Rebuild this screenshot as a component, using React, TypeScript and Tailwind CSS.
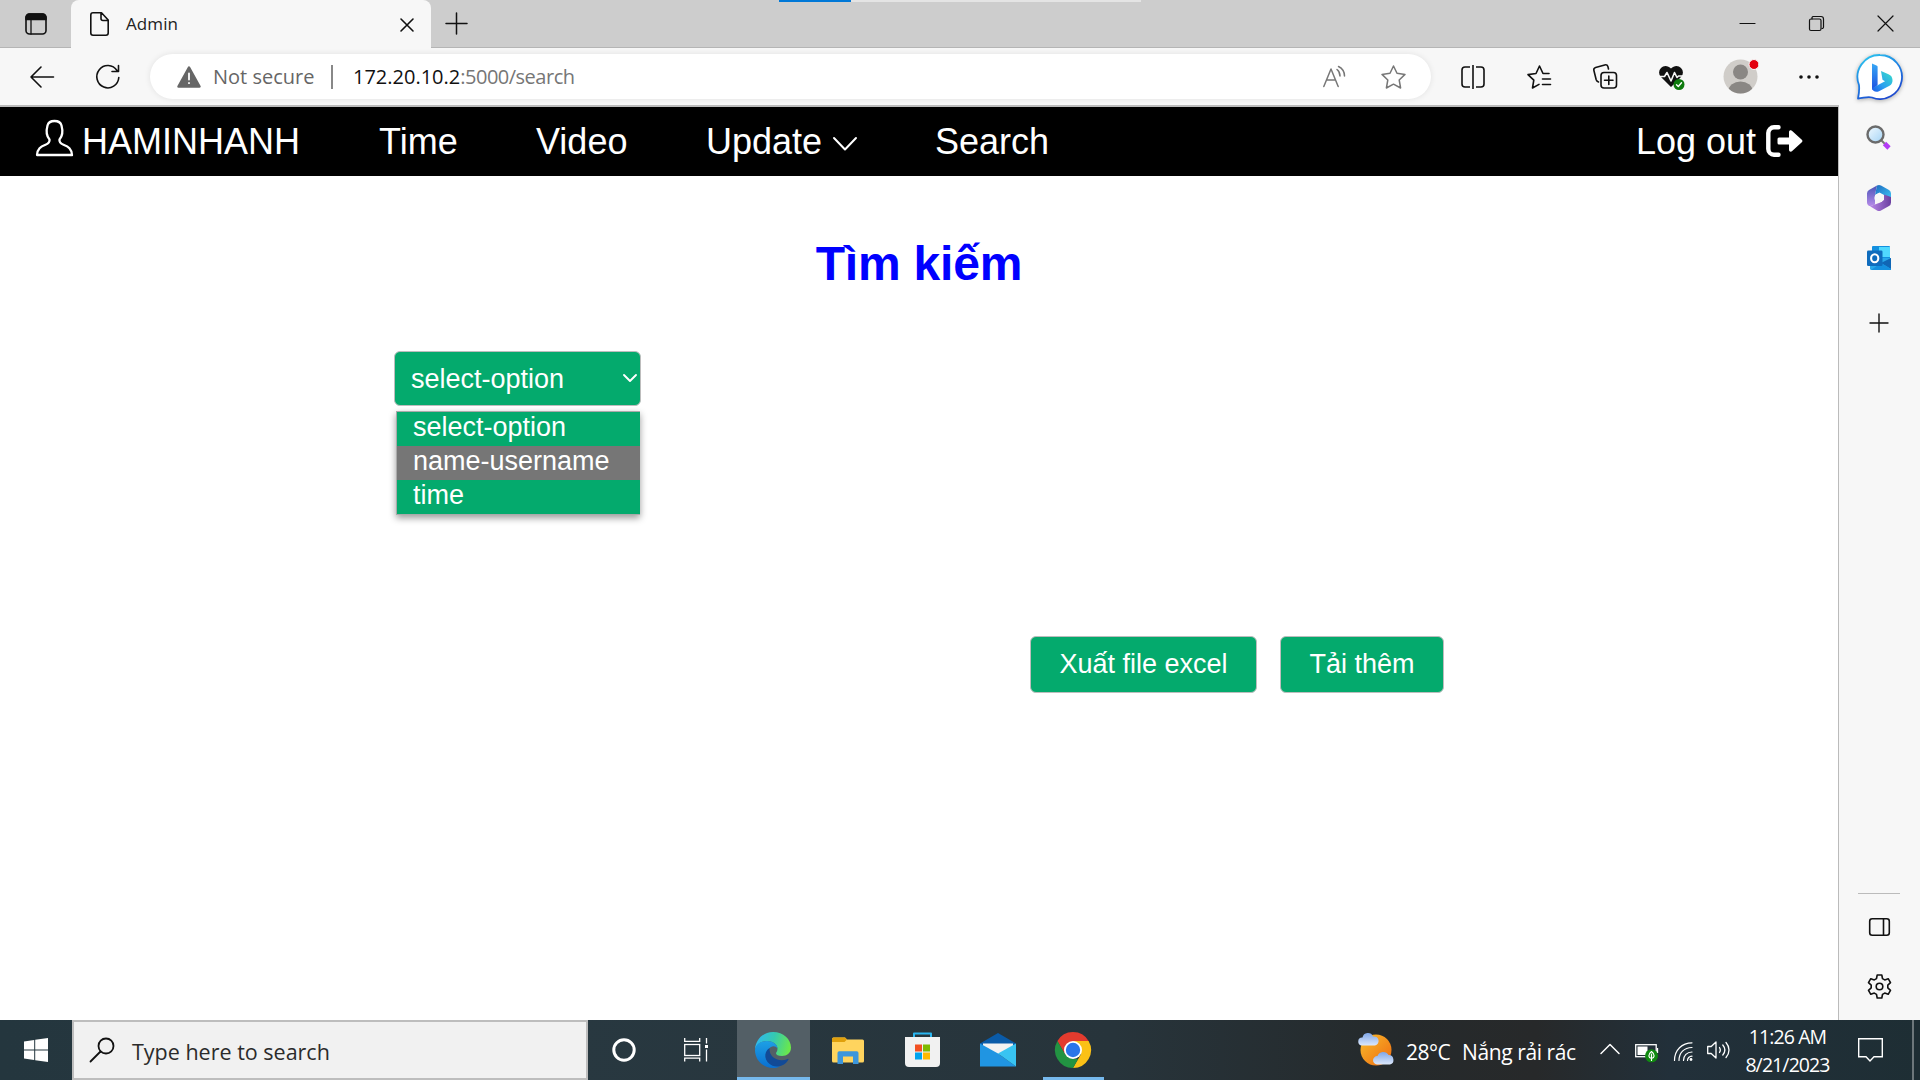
import React from "react";

type IconProps = { w: number; h: number; className?: string; children: React.ReactNode };

function Icon({ w, h, className = "", children }: IconProps) {
  return (
    <svg
      width={w}
      height={h}
      viewBox={`0 0 ${w} ${h}`}
      fill="none"
      stroke="currentColor"
      strokeWidth={1.6}
      strokeLinecap="round"
      strokeLinejoin="round"
      className={`block shrink-0 overflow-visible ${className}`}
    >
      {children}
    </svg>
  );
}

function TabStrip() {
  return (
    <div className="flex h-12 shrink-0 bg-[#cdcdcd] text-[#111]">
      <div className="flex w-[71px] shrink-0 items-center border-b border-[#b5b5b5] pl-[25px]">
        <Icon w={22} h={22}>
          <rect x="1" y="1" width="20" height="20" rx="3.5" />
          <path d="M1 6.5V4.5a3.5 3.5 0 0 1 3.5-3.5h13A3.5 3.5 0 0 1 21 4.500V6.500Z" fill="currentColor" />
          <path d="M6 6v15" strokeWidth={1.3} />
        </Icon>
      </div>
      <div className="flex w-[360px] shrink-0 items-center rounded-t-lg bg-[#f7f7f7] pl-[19px]">
        <Icon w={19} h={24}>
          <path d="M3 .8h8.500L18.200 8v13a2.200 2.200 0 0 1-2.200 2.200H3A2.200 2.200 0 0 1 .8 21V3A2.200 2.200 0 0 1 3 .8ZM11 1v5.500A2 2 0 0 0 13 8.500h5" />
        </Icon>
        <span className="ml-[17px] w-[275px] text-[17px] leading-6 tracking-[0.1px] text-[#222]">Admin</span>
        <Icon w={12} h={12} className="mt-[2px]">
          <path d="M0 0l12 12M12 0L0 12" />
        </Icon>
      </div>
      <div className="flex flex-1 items-center border-b border-[#b5b5b5] pl-[15px]">
        <Icon w={21} h={21}>
          <path d="M10.500 0v21M0 10.500h21" strokeWidth={1.5} />
        </Icon>
        <div className="ml-[312px] flex h-[2px] w-[362px] self-start bg-[#e4e4e4]">
          <div className="w-[72px] bg-[#0078d7]" />
        </div>
        <Icon w={15} h={15} className="ml-[599px]">
          <path d="M0 7.500h15" strokeWidth={1.2} />
        </Icon>
        <Icon w={15} h={15} className="ml-[54px]">
          <path d="M3 3V1.500A1.500 1.500 0 0 1 4.500.500H12A2.500 2.500 0 0 1 14.500 3v8a1.500 1.500 0 0 1-1.500 1.500" strokeWidth={1.2} />
          <rect x=".5" y="3" width="11.500" height="11.500" rx="1.500" strokeWidth={1.2} />
        </Icon>
        <Icon w={15} h={15} className="ml-[54px]">
          <path d="M0 0l15 15M15 0L0 15" strokeWidth={1.2} />
        </Icon>
      </div>
    </div>
  );
}

function Toolbar() {
  return (
    <div className="flex h-[57px] shrink-0 items-center bg-[#f7f7f7] text-[#111]">
      <Icon w={24} h={22} className="ml-[30px]">
        <path d="M23.500 11H1M11 1L1 11l10 10" />
      </Icon>
      <Icon w={24} h={24} className="ml-[42px]">
        <path d="M22.800 12.500A11 11.200 0 1 1 21 5.500M22.500.500V6.500H16" />
      </Icon>
      <div className="ml-[30px] flex h-[45px] w-[1281px] shrink-0 items-center rounded-full bg-white shadow-[0_0_6px_rgba(0,0,0,0.09)]">
        <Icon w={24} h={22} className="ml-[27px] text-[#666]">
          <path d="M12 1.500L22.500 20.500H1.500Z" fill="currentColor" strokeWidth={2.500} />
          <path d="M12 7.500v6M12 17v.2" stroke="#fff" strokeWidth={1.800} />
        </Icon>
        <span className="ml-[12px] w-[118px] whitespace-nowrap text-[20px] leading-6 text-[#666]">Not secure</span>
        <div className="h-6 w-[2px] bg-[#888]" />
        <span className="ml-[20px] w-[970px] whitespace-nowrap text-[20px] leading-6 text-[#767676]">
          <span className="text-[#111]">172.20.10.2</span>
          <span className="tracking-[-0.5px]">:5000/search</span>
        </span>
        <Icon w={23} h={22} className="text-[#777]">
          <path d="M.8 20.500L8 3l7.200 17.500M3.500 14h9M14 3.500c2 1.500 3 3.500 3 6.500M15.500.500c4 2 6 5.500 6 9.500" strokeWidth={1.500} />
        </Icon>
        <Icon w={25} h={24} className="ml-[35px] text-[#777]">
          <path d="M12.500 1l3.500 7.300 8 1.100-5.800 5.600 1.400 8-7.100-3.800L5.400 23l1.400-8L1 9.400l8-1.100Z" strokeWidth={1.500} />
        </Icon>
      </div>
      <Icon w={24} h={24} className="ml-[30px]">
        <path d="M9 2H4a3 3 0 0 0-3 3v14a3 3 0 0 0 3 3h5M15 2h5a3 3 0 0 1 3 3v14a3 3 0 0 1-3 3h-5M12 0v24" strokeLinecap="butt" />
      </Icon>
      <Icon w={24} h={24} className="ml-[42px]">
        <path d="M22 8.500h-6l-3.500-7.500-3.500 7.500-8 1.100 5.800 5.600-1.300 7.800 6.500-3.600M15.500 14h8M15.500 19.500h8" />
      </Icon>
      <Icon w={24} h={25} className="ml-[42px]">
        <rect x="8" y="8.500" width="15.500" height="15.500" rx="3" />
        <path d="M15.800 12v8.500M11.500 16.200H20M15.500 5l-.6-2.400A2.600 2.600 0 0 0 11.700.900L2.600 3.400A2.600 2.600 0 0 0 .900 6.500l2.300 9.200A3.500 3.500 0 0 0 5.500 18" />
      </Icon>
      <Icon w={26} h={24} className="ml-[42px]">
        <path d="M12 22L2 12A6.200 6.200 0 0 1 2 3C4.500.200 9 .200 12 3.500 15 .200 19.500.200 22 3a6.200 6.200 0 0 1 0 9Z" fill="#111" stroke="none" />
        <path d="M0 11.500h5.500L8 7.500l4 8.500 3.500-8.500 2.500 5 1.500-1.500H24" stroke="#f7f7f7" strokeWidth={1.600} />
        <circle cx="20" cy="19.500" r="5.500" fill="#0f7b0f" stroke="none" />
        <path d="M17.500 19.700l1.800 1.800 3.200-3.700" stroke="#fff" strokeWidth={1.400} />
      </Icon>
      <Icon w={35} h={35} className="ml-[38px]">
        <clipPath id="avatarClip"><circle cx="17.500" cy="17.500" r="17" /></clipPath>
        <g clipPath="url(#avatarClip)" stroke="none">
          <rect width="35" height="35" fill="#d0cdc9" />
          <circle cx="17.500" cy="13" r="7.500" fill="#8a8784" />
          <ellipse cx="17.500" cy="32" rx="12" ry="9.500" fill="#8a8784" />
        </g>
        <circle cx="31" cy="5.500" r="5" fill="#e3000f" stroke="#f7f7f7" strokeWidth={1} />
      </Icon>
      <Icon w={20} h={4} className="ml-[41px]">
        <g fill="currentColor" stroke="none">
          <circle cx="2" cy="2" r="1.800" />
          <circle cx="10" cy="2" r="1.800" />
          <circle cx="18" cy="2" r="1.800" />
        </g>
      </Icon>
      <Icon w={46} h={46} className="ml-[38px] drop-shadow-[0_1px_2px_rgba(0,0,0,0.3)]">
        <defs>
          <linearGradient id="bubble" x1="0" y1="0" x2=".5" y2="1">
            <stop offset="0" stopColor="#2fd0f0" />
            <stop offset=".5" stopColor="#1e86e5" />
            <stop offset="1" stopColor="#1d4bd0" />
          </linearGradient>
          <linearGradient id="bStem" x1="0" y1="0" x2="0" y2="1">
            <stop offset="0" stopColor="#37a8f5" />
            <stop offset="1" stopColor="#1c4ee0" />
          </linearGradient>
          <linearGradient id="bBowl" x1="1" y1="0" x2="0" y2="1">
            <stop offset="0" stopColor="#37e0c8" />
            <stop offset=".6" stopColor="#2b9ff0" />
            <stop offset="1" stopColor="#1c58e8" />
          </linearGradient>
        </defs>
        <path d="M23 1a22 22 0 1 1-8 42.500C10 42 6 44.500 1 44.500 2 40 2.500 36 2 31A22 22 0 0 1 23 1Z" fill="#fff" stroke="url(#bubble)" strokeWidth={1.800} />
        <path d="M15 9.500l5 2.200a1 1 0 0 1 .6 1V31l-5.600 5Z" fill="url(#bStem)" stroke="none" />
        <path d="M24 17l7.500 3.200a6.500 6.500 0 0 1 1 11.500L22 37.300c-3.500 1.500-6.500-.3-7-3l13-7-2.500-1.500Z" fill="url(#bBowl)" stroke="none" />
      </Icon>
    </div>
  );
}

function SiteNav() {
  return (
    <nav className="flex h-[69px] shrink-0 items-center whitespace-nowrap bg-black font-['Liberation_Sans',Arial,sans-serif] text-[36px] leading-[44px] text-white">
      <Icon w={37} h={37} className="-mt-[6px] ml-[36px]">
        <path
          d="M13.500 19.500C10.500 16 10 11 11.500 5.500 12.500 1.500 15 1 18.500 1s6 .5 7 4.500c1.500 5.500 1 10.500-2 14-.5 3 1 4 4 5.200 5 2 8 4 8.500 10.300H1c.5-6.300 3.500-8.300 8.500-10.300 3-1.200 4.500-2.200 4-5.200Z"
          strokeWidth={2.300}
        />
      </Icon>
      <span className="ml-[9px] w-[297px]">HAMINHANH</span>
      <span className="w-[157px]">Time</span>
      <span className="w-[170px]">Video</span>
      <span className="w-[128px]">Update</span>
      <Icon w={22} h={12} className="mt-[4px]">
        <path d="M0 0l11 11.500L22 0" strokeWidth={2} />
      </Icon>
      <span className="ml-[79px] w-[701px]">Search</span>
      <span className="w-[130px]">Log out</span>
      <Icon w={37} h={32} className="-mt-[2px]">
        <path d="M12.500 2.300H8A5.700 5.700 0 0 0 2.300 8v16A5.700 5.700 0 0 0 8 29.700h4.500" strokeWidth={4.400} />
        <path d="M13 12.500h10V7.300c0-2 2-2.500 3.200-1.300l9.600 8.800c.8.700.8 1.700 0 2.400L26.200 26c-1.200 1.200-3.200.7-3.200-1.300v-5.200H13a1.500 1.500 0 0 1-1.500-1.500v-4a1.500 1.500 0 0 1 1.500-1.500Z" fill="currentColor" stroke="none" />
      </Icon>
    </nav>
  );
}

function SelectBox() {
  const row = "h-[34px] pl-[16px] leading-[30px]";
  return (
    <div className="relative ml-[394px] mt-[59px] h-[55px] w-[247px] shrink-0">
      <div className="flex h-[55px] items-center justify-between rounded-[6px] border border-[#bdbdbd] bg-[#04aa6d] pl-[16px] pr-[4px]">
        <span className="leading-[32px]">select-option</span>
        <Icon w={12} h={7}>
          <path d="M0 0l6 6 6-6" strokeWidth={1.900} />
        </Icon>
      </div>
      <div className="absolute left-[2px] top-[60px] w-[244px] border border-r-0 border-[#aaa] bg-[#04aa6d] shadow-[0_3px_7px_rgba(0,0,0,0.4)]">
        <div className={row}>select-option</div>
        <div className={`${row} bg-[#767676]`}>name-username</div>
        <div className={row}>time</div>
      </div>
    </div>
  );
}

function Page() {
  const button = "h-[57px] rounded-[6px] border border-[#bdbdbd] bg-[#04aa6d] text-center";
  return (
    <main className="flex flex-1 flex-col bg-white font-['Liberation_Sans',Arial,sans-serif] text-[27px] text-white">
      <h1 className="mt-[60px] text-center text-[48px] font-bold leading-[56px] tracking-[-0.2px] text-[#0000ff]">Tìm kiếm</h1>
      <SelectBox />
      <div className="ml-[1030px] mt-[230px] flex gap-[23px]">
        <button className={`${button} w-[227px]`}>Xuất file excel</button>
        <button className={`${button} w-[164px]`}>Tải thêm</button>
      </div>
    </main>
  );
}

function Sidebar() {
  return (
    <aside className="flex w-[80px] shrink-0 flex-col items-center bg-[#f7f7f7] text-[#111]">
      <Icon w={26} h={26} className="mt-[20px]">
        <defs>
          <linearGradient id="lens" x1="0" y1="0" x2="1" y2="1">
            <stop offset="0" stopColor="#f2faff" />
            <stop offset="1" stopColor="#a3d3f5" />
          </linearGradient>
        </defs>
        <path d="M18.500 18.500l4.500 4.500" stroke="#b43cf5" strokeWidth={4.600} strokeLinecap="butt" />
        <path d="M14 14l4 4" stroke="#777" strokeWidth={2} />
        <circle cx="9.500" cy="9.500" r="8" fill="url(#lens)" stroke="#6b6b6b" strokeWidth={2.400} />
      </Icon>
      <Icon w={24} h={26} className="mt-[34px]">
        <defs>
          <linearGradient id="m1" x1="0" y1="0" x2="0" y2="1"><stop offset="0" stopColor="#4a55b8" /><stop offset="1" stopColor="#b58be8" /></linearGradient>
          <linearGradient id="m2" x1="0" y1="0" x2="1" y2="1"><stop offset="0" stopColor="#1c6ac0" /><stop offset="1" stopColor="#3fc6f5" /></linearGradient>
          <linearGradient id="m3" x1="0" y1="0" x2="1" y2="0"><stop offset="0" stopColor="#b888e8" /><stop offset="1" stopColor="#6b3fa0" /></linearGradient>
        </defs>
        <g stroke="none">
          <path d="M10 .6L2 5A4 4 0 0 0 0 8.500v9A3.500 3.500 0 0 0 4 21l4-1.500V10Z" fill="url(#m1)" />
          <path d="M10 .6a4 4 0 0 1 4 0L22 5a4 4 0 0 1 2 3.500V15l-7-5-4.500-2.500L8 10Z" fill="url(#m2)" />
          <path d="M24 12v5.500a4 4 0 0 1-2 3.500l-8 4.400a4 4 0 0 1-4 0L3 21.300l9-3.300 5-3V9.500Z" fill="url(#m3)" />
          <circle cx="12" cy="13" r="4.600" fill="#f7f7f7" />
        </g>
      </Icon>
      <Icon w={24} h={24} className="mt-[35px]">
        <g stroke="none">
          <rect x="5" y="0" width="18" height="16" rx="1" fill="#1490df" />
          <rect x="12" y="1" width="11" height="10" fill="#50d9ff" />
          <path d="M3 12h21v10.500a1.500 1.500 0 0 1-1.500 1.500H4.500A1.500 1.500 0 0 1 3 22.500Z" fill="#28a8ea" />
          <path d="M24 12v11L14 17Z" fill="#1066b5" />
          <path d="M14 17l10 6v1H4Z" fill="#1490df" />
          <rect x="0" y="4.500" width="15.500" height="15.500" rx="1.300" fill="#0f6cbd" />
        </g>
        <ellipse cx="7.700" cy="12.200" rx="3.600" ry="4" stroke="#fff" strokeWidth={2.100} />
      </Icon>
      <Icon w={18} h={18} className="mt-[44px]">
        <path d="M9 0v18M0 9h18" strokeWidth={1.400} />
      </Icon>
      <div className="mt-[561px] h-px w-[42px] bg-[#bbb]" />
      <Icon w={21} h={18} className="mt-[24px]">
        <rect x=".7" y=".7" width="19.600" height="16.600" rx="2.500" />
        <path d="M14.500.700v16.600" />
      </Icon>
      <Icon w={25} h={25} className="mt-[38px]">
        <path d="M10.200 1h4.600l.7 3.600 2.200 1.300 3.500-1.200 2.300 4-2.700 2.500v2.600l2.700 2.500-2.300 4-3.500-1.200-2.200 1.300-.7 3.600h-4.600l-.7-3.600-2.200-1.300-3.500 1.200-2.300-4 2.700-2.500v-2.600L1.500 8.700l2.300-4 3.500 1.200 2.200-1.300Z" />
        <circle cx="12.500" cy="12.500" r="3.300" />
      </Icon>
    </aside>
  );
}

function Taskbar() {
  return (
    <div className="flex h-[60px] shrink-0 items-center bg-[linear-gradient(90deg,#24363e_0%,#283840_30%,#27343b_58%,#252a2c_72%,#27292a_80%,#22303a_87%,#1e2e34_100%)] text-white">
      <div className="flex w-[72px] shrink-0 pl-[24px]">
        <Icon w={24} h={24}>
          <path d="M0 3.500L10.200 2v9.500H0ZM11.200 1.800L24 0v11.500H11.200ZM0 12.500h10.200V22L0 20.600ZM11.200 12.500H24V24l-12.800-1.800Z" fill="#fff" stroke="none" />
        </Icon>
      </div>
      <div className="flex h-[60px] w-[516px] shrink-0 items-center border-2 border-[#bdbdbd] bg-[#f1f1f1] pl-[16px] text-[#111]">
        <Icon w={24} h={24}>
          <circle cx="16" cy="8" r="7.500" strokeWidth={1.800} />
          <path d="M10.500 13.500L.500 23.500" strokeWidth={1.800} />
        </Icon>
        <span className="ml-[18px] pt-[3px] text-[21.500px] leading-7 text-[#2b2b2b]">Type here to search</span>
      </div>
      <Icon w={24} h={24} className="ml-[24px]">
        <circle cx="12" cy="12" r="10.200" strokeWidth={3} />
      </Icon>
      <Icon w={24} h={24} className="ml-[48px]">
        <g strokeWidth={1.300} strokeLinecap="butt" strokeLinejoin="miter">
          <rect x=".7" y="6.500" width="15" height="11" />
          <path d="M.7 0v3.300h15V0M.7 23.500v-3.300h15v3.300M22.500 0v5.500M22.500 11.500v12" />
        </g>
        <rect x="21" y="7" width="3" height="3" fill="#fff" stroke="none" />
      </Icon>
      <div className="ml-[29px] flex h-[60px] w-[73px] shrink-0 flex-col border-b-[3px] border-[#76b9ed] bg-[#535f66] pl-[18px] pt-[12px]">
        <Icon w={36} h={36}>
          <defs>
            <linearGradient id="e1" x1="0" y1=".3" x2="1" y2=".5"><stop offset="0" stopColor="#2fb8f2" /><stop offset=".5" stopColor="#35c9b0" /><stop offset="1" stopColor="#6be84a" /></linearGradient>
            <linearGradient id="e2" x1="0" y1="0" x2="0" y2="1"><stop offset="0" stopColor="#1da0e5" /><stop offset="1" stopColor="#0a6fd0" /></linearGradient>
          </defs>
          <g stroke="none">
            <path d="M0 17C1 7 8.500 0 18 0c10.500 0 18 7.500 18 15.500 0 5.500-4 8.500-9 8.500-4 0-6-1.500-6-2.800 0-1 1.500-1.700 1.500-4.500C22.500 12 17 9 12 9 6 9 2 12.500 0 17Z" fill="url(#e1)" />
            <path d="M0 18C.5 12 6 9 12 9c5.500 0 10.500 3.200 10.500 7.500-1-1.500-2.500-2.200-4-2.200C15 14.300 12 18 12 22.500 12 29 18 34 25 34.500 22.500 35.500 20 36 18 36 8 36 0 28 0 18Z" fill="url(#e2)" />
            <path d="M14.500 16C8 20 9 30 17.500 33.800c5.500 2.200 13-.3 16-6.300.2-.6-.3-.9-.8-.6C24 30.500 14 26 14.500 16Z" fill="#124a96" />
          </g>
        </Icon>
      </div>
      <Icon w={32} h={27} className="ml-[22px]">
        <g stroke="none">
          <path d="M0 2a1.500 1.500 0 0 1 1.500-1.500H13l2 2h15.500A1.500 1.500 0 0 1 32 4v20a1.500 1.500 0 0 1-1.500 1.500h-29A1.500 1.500 0 0 1 0 24Z" fill="#ffd45e" />
          <path d="M0 5V2A1.500 1.500 0 0 1 1.500.500H13L15 2.500 12.500 5Z" fill="#e0a00c" />
          <path d="M5.500 27V16A1.800 1.800 0 0 1 7.300 14.200h17.400A1.800 1.800 0 0 1 26.500 16v11H21v-7.500H11V27Z" fill="#3c96dc" />
        </g>
      </Icon>
      <Icon w={35} h={36} className="ml-[41px]">
        <path d="M9 5V1.500h17V5" stroke="#2ab6f0" strokeWidth={2} />
        <path d="M0 5h35v26a4 4 0 0 1-4 4H4a4 4 0 0 1-4-4Z" fill="#f1f1f1" stroke="none" />
        <g stroke="none">
          <rect x="10" y="12.500" width="7" height="7" fill="#f25022" />
          <rect x="18" y="12.500" width="7" height="7" fill="#7fba00" />
          <rect x="10" y="20.500" width="7" height="7" fill="#00a4ef" />
          <rect x="18" y="20.500" width="7" height="7" fill="#ffb900" />
        </g>
      </Icon>
      <Icon w={36} h={34} className="ml-[40px]">
        <g stroke="none">
          <path d="M0 10.500L18 0l18 10.500V16H0Z" fill="#0a5ba8" />
          <path d="M3 10.500h30v4L18 22 3 14.500Z" fill="#f2f2f2" />
          <path d="M0 10.500L18 20.500 36 33.500H0Z" fill="#2095e2" />
          <path d="M36 10.500v23L18 20.500Z" fill="#38c4f2" />
        </g>
      </Icon>
      <div className="ml-[27px] flex h-[60px] w-[61px] shrink-0 flex-col border-b-[3px] border-[#76b9ed] pl-[12px] pt-[12px]">
        <Icon w={36} h={36}>
          <g stroke="none">
            <path d="M2.400 9A18 18 0 0 1 33.600 9H18L10.200 22.500Z" fill="#e33b2e" />
            <path d="M33.600 9A18 18 0 0 1 18 36L25.800 22.500 18 9Z" fill="#fbc116" />
            <path d="M18 36A18 18 0 0 1 2.400 9L10.200 22.500 18 27h5Z" fill="#229342" />
            <circle cx="18" cy="18" r="9" fill="#fff" />
            <circle cx="18" cy="18" r="7.200" fill="#2a75ea" />
          </g>
        </Icon>
      </div>
      <Icon w={36} h={34} className="ml-[254px] -mt-[2px]">
        <defs>
          <linearGradient id="sun" x1="0" y1="0" x2="1" y2="1"><stop offset="0" stopColor="#f8bd2c" /><stop offset="1" stopColor="#ef6a10" /></linearGradient>
          <linearGradient id="cloud" x1="0" y1="0" x2="0" y2="1"><stop offset="0" stopColor="#7fa6e8" /><stop offset="1" stopColor="#dce8fb" /></linearGradient>
        </defs>
        <g stroke="none">
          <circle cx="18" cy="18" r="15.500" fill="url(#sun)" />
          <path d="M4 13.500a4 4 0 0 1 .5-8A5.500 5.500 0 0 1 15 4.500a4.600 4.600 0 0 1 2 9Z" fill="url(#cloud)" />
          <path d="M19 32.500a4.200 4.200 0 0 1 .5-8.400 6 6 0 0 1 11-1 4.800 4.800 0 0 1 1.500 9.400Z" fill="url(#cloud)" />
        </g>
      </Icon>
      <span className="ml-[12px] w-[56px] whitespace-nowrap pt-[3px] text-[21px] leading-7 tracking-[-0.5px]">28°C</span>
      <span className="w-[139px] whitespace-nowrap pt-[3px] text-[21px] leading-7 tracking-[-0.4px]">Nắng rải rác</span>
      <Icon w={18} h={10} className="mt-[-2px]">
        <path d="M0 9.500L9 .500l9 9" strokeWidth={1.500} />
      </Icon>
      <Icon w={24} h={18} className="ml-[16px] mt-[6px]">
        <g strokeLinecap="butt" strokeLinejoin="miter">
          <rect x=".7" y=".7" width="20.500" height="12" strokeWidth={1.300} />
          <rect x="2.500" y="2.500" width="10" height="8.500" fill="#fff" stroke="none" />
          <path d="M22.500 4v5" strokeWidth={1.300} />
        </g>
        <circle cx="16.500" cy="11.800" r="6.500" fill="#108a10" stroke="none" />
        <path d="M16.500 7.500c-4 3-3 6.500 0 7 3-.5 4-4 0-7ZM16.500 10v6.500" strokeWidth={1.200} />
      </Icon>
      <Icon w={19} h={19} className="ml-[15px] mt-[3px]">
        <path d="M.500 18.500C.500 8 8 .800 18 .800M5 18.500C5 11 10 5.500 18 5.500M9.500 18.500c0-4.800 3.500-8.500 8.500-8.500M13.500 18.500c0-2.200 1.800-4.300 4.500-4.300" strokeWidth={1.200} />
        <circle cx="17" cy="17.500" r="1.400" fill="#fff" stroke="none" />
      </Icon>
      <Icon w={23} h={18} className="ml-[14px]">
        <path d="M.700 5.500h3.500L9 1v16l-4.800-4.500H.700ZM12.500 6.500c1 1.500 1 3.500 0 5M15.800 4c2.500 3 2.500 7 0 10M19 1.500c4 4.500 4 10.500 0 15" strokeWidth={1.300} />
      </Icon>
      <div className="ml-[8px] w-[99px] whitespace-nowrap pt-px text-center text-[19.500px] leading-[28px] tracking-[-0.9px]">
        <div>11:26 AM</div>
        <div>8/21/2023</div>
      </div>
      <Icon w={25} h={24} className="ml-[21px]">
        <path d="M.7.700h23.600v18H16l-4 4.300-4-4.300H.700Z" strokeWidth={1.400} strokeLinejoin="miter" />
      </Icon>
      <div className="ml-auto mr-[6px] h-[60px] w-[2px] bg-[#6d777b]" />
    </div>
  );
}

export default function App() {
  return (
    <div className="flex h-[1080px] w-[1920px] flex-col overflow-hidden bg-[#f7f7f7] font-['Open_Sans','Noto_Sans',sans-serif]">
      <TabStrip />
      <Toolbar />
      <div className="flex min-h-0 flex-1">
        <div className="flex w-[1839px] shrink-0 flex-col border-r border-t-2 border-[#bbb]">
          <SiteNav />
          <Page />
        </div>
        <Sidebar />
      </div>
      <Taskbar />
    </div>
  );
}
